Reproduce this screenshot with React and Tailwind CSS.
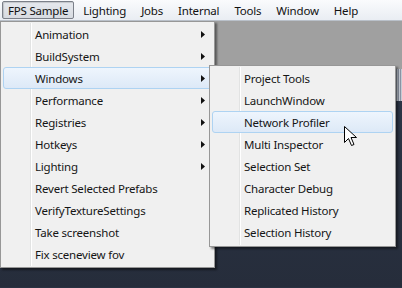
const menuBar = ["FPS Sample", "Lighting", "Jobs", "Internal", "Tools", "Window", "Help"];

const mainItems = [
  { label: "Animation", sub: true },
  { label: "BuildSystem", sub: true },
  { label: "Windows", sub: true, active: true },
  { label: "Performance", sub: true },
  { label: "Registries", sub: true },
  { label: "Hotkeys", sub: true },
  { label: "Lighting", sub: true },
  { label: "Revert Selected Prefabs" },
  { label: "VerifyTextureSettings" },
  { label: "Take screenshot" },
  { label: "Fix sceneview fov" },
];

const windowItems = [
  { label: "Project Tools" },
  { label: "LaunchWindow" },
  { label: "Network Profiler", active: true },
  { label: "Multi Inspector" },
  { label: "Selection Set" },
  { label: "Character Debug" },
  { label: "Replicated History" },
  { label: "Selection History" },
];

function MenuRow({ item }) {
  return (
    <div className="relative h-[22px] flex items-center pt-[1px]">
      {item.active && (
        <div className="absolute inset-y-0 left-px right-[1px] rounded-[3px] border border-[#aed3f2] bg-gradient-to-b from-[#eef5fd] to-[#dde9f7]" />
      )}
      <span className="relative pl-[33px] text-[#151515]">{item.label}</span>
      {item.sub && (
        <svg className="absolute right-[8px] top-[8px]" width="4" height="7" viewBox="0 0 4 7">
          <path d="M0 0 L4 3.5 L0 7 Z" fill="#111" />
        </svg>
      )}
    </div>
  );
}

function Menu({ items, className }) {
  return (
    <div className={`absolute border border-[#979797] bg-[#f0f0f0] p-[1px] shadow-[2px_2px_2px_rgba(0,0,0,0.45)] ${className}`}>
      {/* gutter separator */}
      <div className="absolute top-[1px] bottom-[1px] left-[29px] flex">
        <div className="w-px bg-[#e2e3e3]" />
        <div className="w-px bg-white" />
      </div>
      <div className="relative flex flex-col">
        {items.map((item) => (
          <MenuRow key={item.label} item={item} />
        ))}
      </div>
    </div>
  );
}

export default function App() {
  return (
    <div className="relative w-[402px] h-[288px] overflow-hidden font-['Noto_Sans',sans-serif] text-[11.5px] tracking-[-0.2px] leading-none bg-[#2a3242]">
      {/* menu bar */}
      <div className="h-[21px] flex items-center gap-[3px] pl-[2px] bg-gradient-to-b from-[#fafbfd] to-[#e9edf3] border-b border-[#b9c0c9]">
        {menuBar.map((m, i) => (
          <div
            key={m}
            className={`h-[18px] flex items-center px-[5px] pt-[1px] text-[#111] ${
              i === 0
                ? "border border-[#7b8089] rounded-[2px] bg-gradient-to-b from-[#e6e9ee] to-[#d7dbe1] shadow-[inset_1px_1px_1px_rgba(0,0,0,0.15)]"
                : "border border-transparent"
            }`}
          >
            {m}
          </div>
        ))}
      </div>
      {/* editor panel behind */}
      <div className="h-[80px] bg-[#a0a0a0] flex justify-end">
        <div className="mt-[48px] w-[6px] h-[32px] bg-[repeating-linear-gradient(90deg,#8a93a3_0px,#8a93a3_1px,#c5cbd4_1px,#c5cbd4_2px)]" />
      </div>
      <div className="h-[186px] bg-gradient-to-b from-[#2b3445] to-[#262d3b]" />

      <Menu items={mainItems} className="left-0 top-[21px] w-[215px] h-[247px]" />
      <Menu items={windowItems} className="left-[209px] top-[65px] w-[187px] h-[182px]" />

      {/* mouse cursor */}
      <svg className="absolute left-[344px] top-[126px]" width="14" height="21" viewBox="0 0 14 21">
        <path d="M0.5 0.5 L0.5 16.5 L4.5 12.5 L7.5 19.5 L10 18.5 L7 11.5 L12.5 11.5 Z" fill="#fff" stroke="#000" strokeWidth="1" />
      </svg>
    </div>
  );
}
